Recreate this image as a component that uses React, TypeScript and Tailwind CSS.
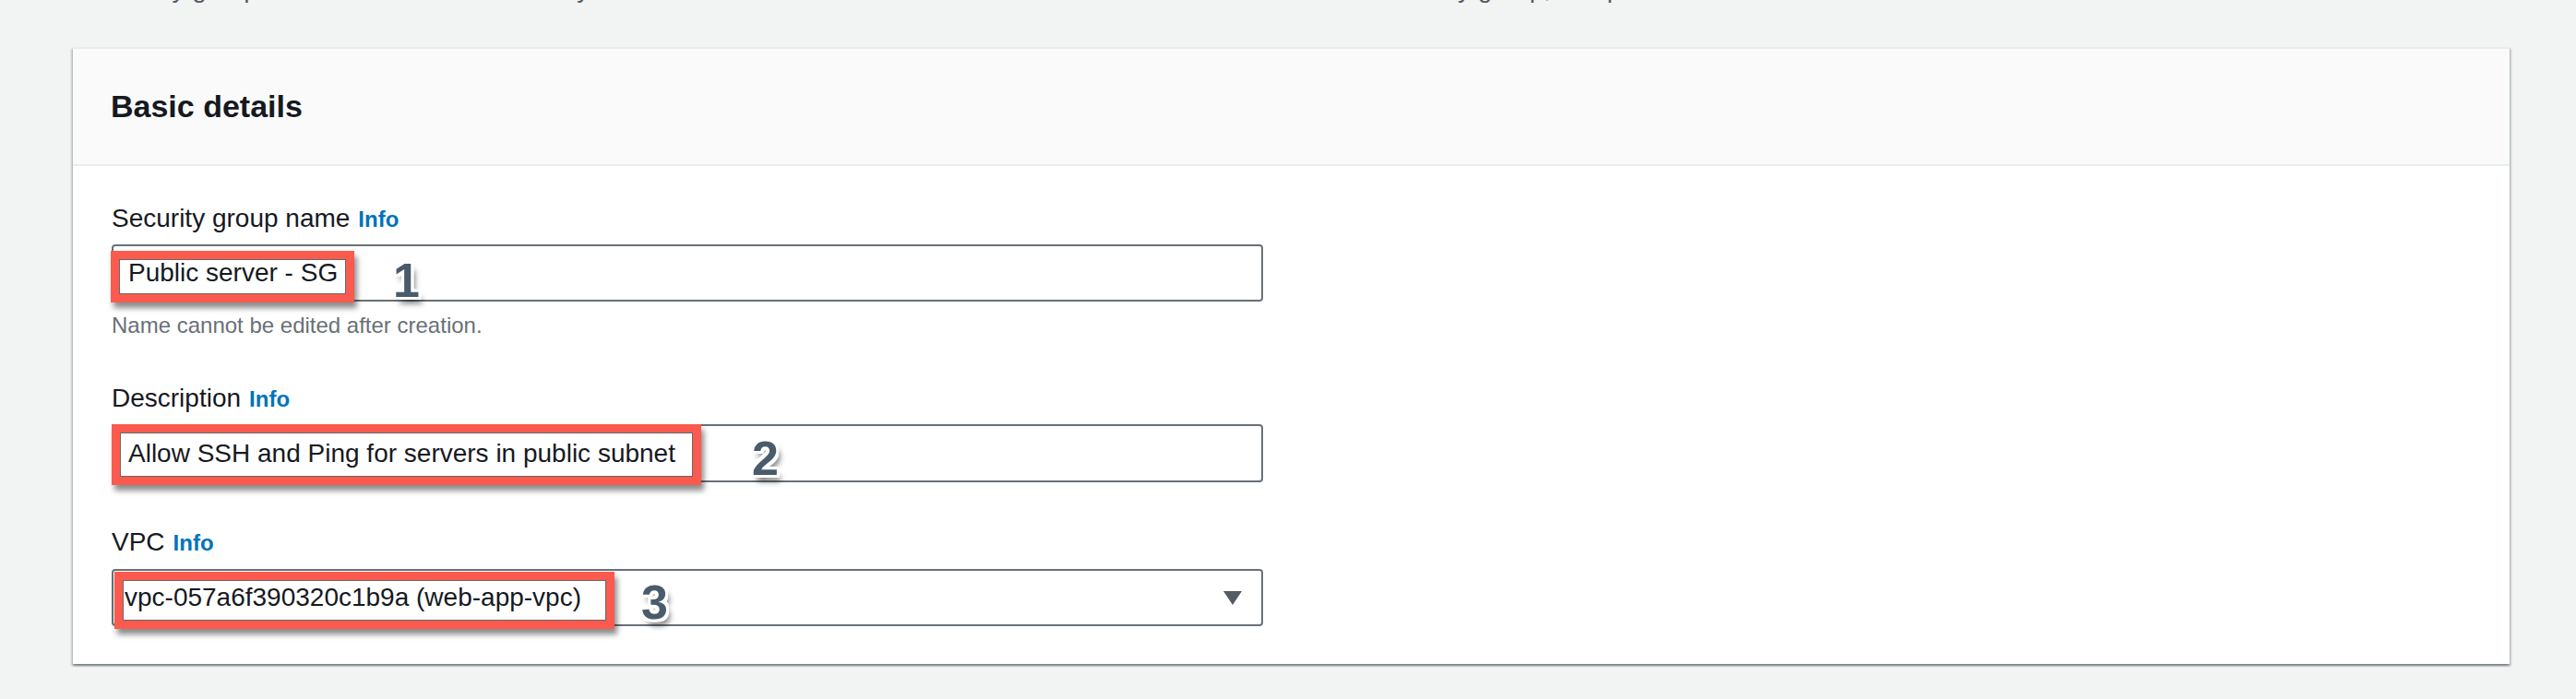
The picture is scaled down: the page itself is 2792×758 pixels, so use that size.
const callout =
  "absolute border-[9px] border-[#fb5a4e] shadow-[inset_0_0_0_1px_rgba(40,40,40,0.7),3px_6px_6px_rgba(0,0,0,0.45)] pointer-events-none";

const marker =
  "absolute font-bold text-[52px] leading-none text-[#4a5b6b] [text-shadow:3px_0_0_#fff,-3px_0_0_#fff,0_3px_0_#fff,0_-3px_0_#fff,3px_3px_0_#fff,-3px_-3px_0_#fff,3px_-3px_0_#fff,-3px_3px_0_#fff,4px_7px_6px_rgba(0,0,0,0.55)]";

function Label({ text }: { text: string }) {
  return (
    <div className="flex items-baseline h-[40px] leading-[40px] text-[28px] text-[#16191f]">
      {text}
      <span className="ml-[9px] text-[24px] font-bold text-[#0073bb]">Info</span>
    </div>
  );
}

export default function App() {
  return (
    <div className="min-h-[758px] w-[2792px] overflow-hidden bg-[#f2f3f3] pl-[79px] pr-[72px] font-['Liberation_Sans',Arial,sans-serif]">
      <p className="-mt-[32px] h-[40px] leading-[40px] text-[28px] text-[#545b64] whitespace-nowrap">
        A security group acts as a virtual firewall for your instance to control inbound and outbound traffic. To create a new security group, complete the fields below.
      </p>

      <div className="mt-[43px] border-t-2 border-[#eaeded] bg-white shadow-[0_2px_2px_0_rgba(0,28,36,0.35),2px_2px_2px_0_rgba(0,28,36,0.15),-2px_2px_2px_0_rgba(0,28,36,0.15)]">
        <div className="bg-[#fafafa] border-b-2 border-[#eaeded] pl-[41px] pt-[40px] pb-[41px]">
          <h2 className="text-[34px] leading-[44px] font-bold text-[#16191f]">Basic details</h2>
        </div>

        <div className="pl-[42px] pt-[37px] pb-[41px]">
          {/* Security group name */}
          <Label text="Security group name" />
          <div className="relative mt-[8px] w-[1248px]">
            <div className="h-[62px] flex items-center px-4 border-2 border-[#687078] rounded-[4px] text-[28px] text-[#16191f]">
              Public server - SG
            </div>
            <div className={`${callout} -left-[1px] top-[7px] w-[264px] h-[56px]`} />
            <span className={`${marker} left-[305px] top-[13px]`}>1</span>
          </div>
          <p className="mt-[10px] h-[32px] leading-[32px] text-[24px] text-[#687078]">
            Name cannot be edited after creation.
          </p>

          {/* Description */}
          <div className="mt-[43px]">
            <Label text="Description" />
          </div>
          <div className="relative mt-[8px] w-[1248px]">
            <div className="h-[63px] flex items-center px-4 border-2 border-[#687078] rounded-[4px] text-[28px] text-[#16191f]">
              Allow SSH and Ping for servers in public subnet
            </div>
            <div className={`${callout} left-0 top-0 w-[639px] h-[66px]`} />
            <span className={`${marker} left-[694px] top-[11px]`}>2</span>
          </div>

          {/* VPC */}
          <div className="mt-[45px]">
            <Label text="VPC" />
          </div>
          <div className="relative mt-[9px] w-[1248px]">
            <div className="h-[62px] flex items-center justify-between pl-3 pr-[21px] border-2 border-[#687078] rounded-[4px] text-[28px] text-[#16191f]">
              <span>vpc-057a6f390320c1b9a (web-app-vpc)</span>
              <svg width="20" height="15" viewBox="0 0 20 15">
                <path d="M0 0 H20 L10 15 Z" fill="#545b64" />
              </svg>
            </div>
            <div className={`${callout} left-[3px] top-[3px] w-[542px] h-[62px]`} />
            <span className={`${marker} left-[574px] top-[10px]`}>3</span>
          </div>
        </div>
      </div>
    </div>
  );
}
